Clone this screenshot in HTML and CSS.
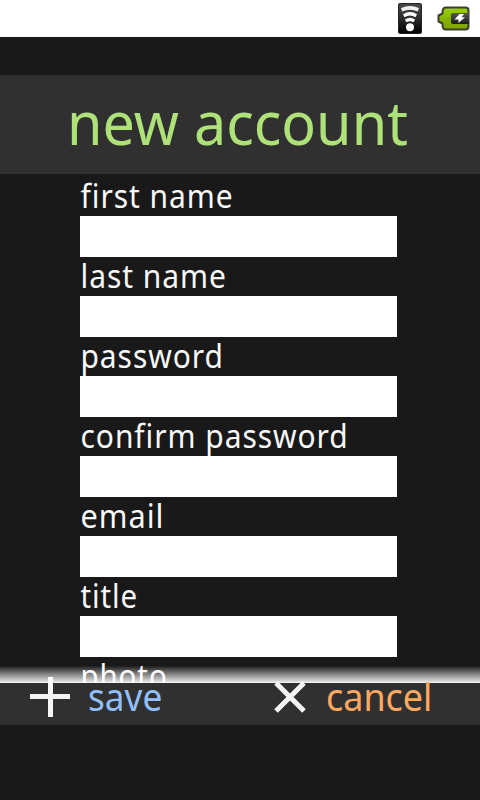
FILE: index.html
```html
<!DOCTYPE html>
<html lang="en">
<head>
<meta charset="utf-8">
<title>new account</title>
<link rel="stylesheet" href="styles.css">
</head>
<body>
<header class="status">
  <svg class="wifi" width="24" height="31" viewBox="0 0 24 31">
    <defs><linearGradient id="g1" x1="0" y1="0" x2="0" y2="1"><stop offset="0" stop-color="#4a4a4a"/><stop offset=".5" stop-color="#2c2c2c"/><stop offset="1" stop-color="#000"/></linearGradient></defs>
    <rect x=".5" y=".5" width="23" height="30" rx="1.500" fill="url(#g1)" stroke="#222"/>
    <g fill="#fff">
      <path d="M3 5Q12 .8 21 5L19.800 8.500Q12 5 4.200 8.500Z" fill="#f0f0f0"/>
      <path d="M5 11.200Q12 7 19 11.200L17.500 14.200Q12 11 6.500 14.200Z"/>
      <path d="M7 16.500Q12 13 17 16.500L15.700 19.300Q12 17 8.300 19.300Z"/>
    </g>
    <circle cx="12" cy="24.200" r="4" fill="#fff"/>
  </svg>
  <svg class="battery" width="33" height="25" viewBox="0 0 33 25">
    <defs><linearGradient id="g2" x1="0" y1="0" x2="0" y2="1"><stop offset="0" stop-color="#9ad400"/><stop offset=".5" stop-color="#86b400"/><stop offset="1" stop-color="#7fa400"/></linearGradient>
    <linearGradient id="g3" x1="0" y1="0" x2="0" y2="1"><stop offset="0" stop-color="#555"/><stop offset="1" stop-color="#1c1c1c"/></linearGradient></defs>
    <path d="M9 1.500H28.500Q31.500 1.500 31.500 4.500V20.500Q31.500 23.500 28.500 23.500H9Q5.500 23.500 5.500 19V17.500L1.500 15.500V9.500L5.500 7.500V6Q5.500 1.500 9 1.500Z" fill="url(#g2)" stroke="#3a3e30" stroke-width="2" stroke-linejoin="round"/>
    <path d="M32 7H16Q14 7 14 9V16Q14 18 16 18H32Z" fill="url(#g3)"/>
    <path d="M22.500 8 17.500 13.500H21.500L21.500 17 28 11.300H24.500L27 8Z" fill="#fff"/>
  </svg>
</header>
<h1 class="title"><span class="title-text">new account</span></h1>
<main class="form">
  <label class="field"><span class="label">first name</span><input class="box" type="text"></label>
  <label class="field"><span class="label">last name</span><input class="box" type="text"></label>
  <label class="field"><span class="label">password</span><input class="box" type="password"></label>
  <label class="field"><span class="label">confirm password</span><input class="box" type="password"></label>
  <label class="field"><span class="label wide">email</span><input class="box" type="text"></label>
  <label class="field"><span class="label narrow">title</span><input class="box" type="text"></label>
  <label class="field"><span class="label narrow">photo</span></label>
  <div class="fade"></div>
</main>
<footer class="actions">
  <div class="action save">
    <svg class="icon plus" width="40" height="40" viewBox="0 0 40 40"><path d="M0 19.500H40M20.500 0V40" stroke="#f5f5f5" stroke-width="5"/></svg>
    <span class="save-text">save</span>
  </div>
  <div class="action cancel">
    <svg class="icon cross" width="34" height="34" viewBox="0 0 34 34"><path d="M3 3 31 31M31 3 3 31" stroke="#f5f5f5" stroke-width="5"/></svg>
    <span class="cancel-text">cancel</span>
  </div>
</footer>
</body>
</html>
```
FILE: styles.css
```css
* { box-sizing: border-box; }
body {
  margin: 0;
  width: 480px;
  height: 800px;
  overflow: hidden;
  background: #191919;
  font-family: "Noto Sans", "Open Sans", sans-serif;
  color: #f8f8f8;
}
.status {
  display: flex;
  justify-content: flex-end;
  gap: 15px;
  height: 37px;
  padding: 3px 11px 0 0;
  background: #fff;
}
.battery { margin-top: 3px; margin-right: -1px; }
.title {
  height: 99px;
  margin: 38px 0 0;
  padding-left: 67px;
  background: #303030;
  color: #aee279;
  font-size: 60px;
  font-weight: 400;
  line-height: 95px;
  white-space: nowrap;
}
.title-text, .label, .save-text, .cancel-text {
  display: inline-block;
  transform-origin: 0 50%;
}
.title-text { transform: scaleX(.958); }
.form {
  position: relative;
  height: 509px;
  padding: 2px 83px 0 80px;
  overflow: hidden;
}
.field { display: block; height: 80px; }
.label {
  display: block;
  height: 40px;
  padding-left: .5px;
  font-size: 32px;
  line-height: 40px;
  letter-spacing: 1px;
  white-space: nowrap;
  transform: scaleX(.937);
}
.wide { transform: scaleX(.96); }
.narrow { transform: scaleX(.92); }
.box {
  display: block;
  position: relative;
  width: 317px;
  height: 41px;
  padding: 0 4px;
  border: 0;
  border-radius: 0;
  background: #fff;
}
.fade {
  position: absolute;
  left: 0;
  right: 0;
  bottom: 0;
  height: 17px;
  background: linear-gradient(rgba(255,255,255,.02), rgba(255,255,255,.19) 18%, rgba(255,255,255,.88) 94%, #fff);
}
.actions {
  display: flex;
  height: 42px;
  background: #303030;
  font-size: 38px;
  line-height: 42px;
}
.action { display: flex; width: 240px; }
.icon { flex: none; }
.plus { margin: -6px 18px 0 30px; }
.cross { margin: -3px 19px 0 33px; }
.save { color: #92c0ff; }
.cancel { color: #ffa961; }
.save-text, .cancel-text { margin-top: -8px; }
.save-text { transform: scaleX(.925); }
.cancel-text { transform: scaleX(.945); }
```
